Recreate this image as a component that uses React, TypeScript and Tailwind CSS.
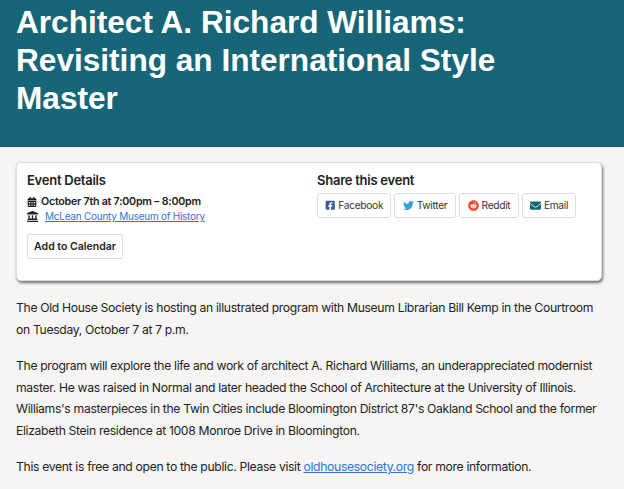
import { FaCalendarAlt, FaEnvelope, FaFacebookSquare, FaLandmark, FaReddit, FaTwitter } from "react-icons/fa";

const shares = [
  { label: "Facebook", width: "w-[74px]", icon: <FaFacebookSquare className="text-[#3b5998] text-[10.5px]" /> },
  { label: "Twitter", width: "w-[62px]", icon: <FaTwitter className="text-[#38a1d3] text-[11px]" /> },
  { label: "Reddit", width: "w-[60px]", icon: <FaReddit className="text-[#f0492a] text-[11px]" /> },
  { label: "Email", width: "w-[54px]", icon: <FaEnvelope className="text-[#176677] text-[11px]" /> },
];

export default function App() {
  return (
    <main className="h-[489px] overflow-hidden bg-[#f6f5f4] font-['Inter',Arial,sans-serif] text-[#222]">
      {/* Header */}
      <header className="h-[147px] bg-[#176677] px-4 pt-[3px] border-b border-[#145a69] font-['Liberation_Sans',Arial,sans-serif]">
        <h1 className="text-[31.6px] leading-[38px] font-bold text-white max-w-[520px]">
          Architect A. Richard Williams: Revisiting an International Style Master
        </h1>
      </header>

      {/* Event card */}
      <section className="ml-4 mt-[15px] w-[586px] h-[119px] bg-white rounded-[5px] border border-[#ddd] shadow-[1px_2px_3px_rgba(0,0,0,0.55)] px-[10px] pt-[8px] flex">
        <div className="w-[290px] shrink-0">
          <h2 className="text-[13px] leading-[18px] font-semibold tracking-[-0.25px]">Event Details</h2>
          <p className="mt-[5px] flex items-center text-[10.7px] leading-[15px] font-semibold tracking-[-0.25px]">
            <FaCalendarAlt className="text-[10px] mr-[4px]" />
            October 7th at 7:00pm – 8:00pm
          </p>
          <p className="flex items-center text-[10px] leading-[15px] tracking-[-0.25px]">
            <FaLandmark className="text-[11px] mr-[7px]" />
            <a href="#" className="text-[#2f74d9] underline">McLean County Museum of History</a>
          </p>
          <button className="mt-[10px] h-[25px] w-[96px] bg-white border border-[#ddd] rounded-[2px] text-[10.5px] font-semibold">
            Add to Calendar
          </button>
        </div>
        <div>
          <h2 className="text-[13px] leading-[18px] font-semibold tracking-[-0.25px]">Share this event</h2>
          <div className="mt-[4px] flex gap-[3px]">
            {shares.map((s) => (
              <a
                key={s.label}
                href="#"
                className={`${s.width} h-[25px] flex items-center justify-center gap-[3px] bg-white border border-[#ddd] rounded-[3px] text-[10.2px] tracking-[-0.3px] text-[#333]`}
              >
                {s.icon}
                {s.label}
              </a>
            ))}
          </div>
        </div>
      </section>

      {/* Body copy */}
      <article className="px-4 mt-[16px] text-[12.2px] leading-[21.5px] tracking-[-0.34px] text-[#222] flex flex-col gap-[15px]">
        <p>
          The Old House Society is hosting an illustrated program with Museum Librarian Bill Kemp in the Courtroom on Tuesday, October 7 at 7 p.m.
        </p>
        <p>
          The program will explore the life and work of architect A. Richard Williams, an underappreciated modernist master. He was raised in Normal and later headed the School of Architecture at the University of Illinois. Williams's masterpieces in the Twin Cities include Bloomington District 87's Oakland School and the former Elizabeth Stein residence at 1008 Monroe Drive in Bloomington.
        </p>
        <p>
          This event is free and open to the public. Please visit{" "}
          <a href="#" className="text-[#2f74d9] underline">oldhousesociety.org</a> for more information.
        </p>
      </article>
    </main>
  );
}
